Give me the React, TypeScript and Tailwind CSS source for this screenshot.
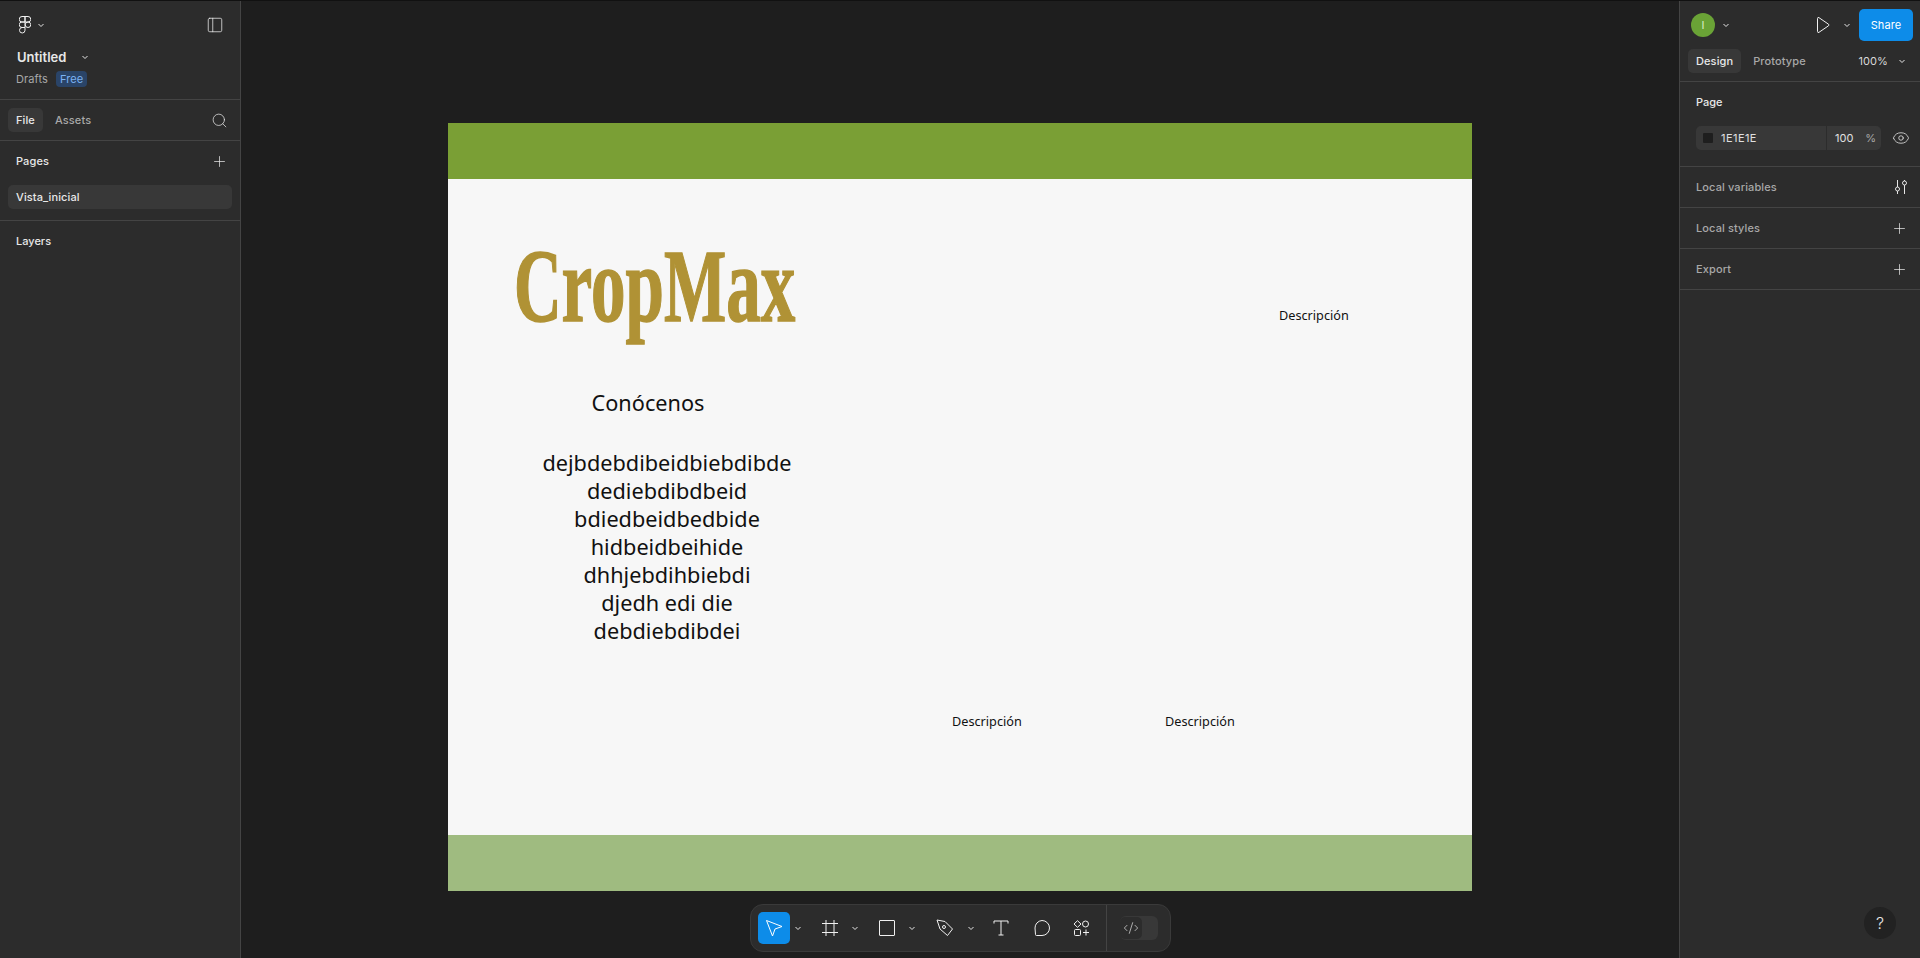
import { CodeXml, Eye, PanelLeft, Plus, Search } from "lucide-react";

const sans = "font-['Inter',sans-serif]";
const canvasText = "font-['Noto_Sans',sans-serif] text-[#111]";

function Caret({ className = "" }: { className?: string }) {
  return (
    <svg width="8" height="8" viewBox="0 0 8 8" className={className} fill="none" stroke="#e6e6e6" strokeWidth="1">
      <path d="M1.5 3 L4 5.5 L6.5 3" />
    </svg>
  );
}

function FigmaMark() {
  return (
    <svg width="12" height="18" viewBox="0 0 12 18" fill="none" stroke="#f0f0f0" strokeWidth="1">
      <path d="M6 .5H3a2.75 2.75 0 0 0 0 5.5h3zM6 .5h3a2.75 2.75 0 0 1 0 5.5H6zM6 6H3a2.75 2.75 0 0 0 0 5.5h3zM6 11.5H3A2.75 2.75 0 1 0 6 14.25zM11.75 8.75a2.75 2.75 0 1 1-5.5 0 2.75 2.75 0 0 1 5.5 0z" />
    </svg>
  );
}

function LeftPanel() {
  return (
    <aside className="w-[241px] shrink-0 bg-[#2c2c2c] border-r border-[#444] flex flex-col">
      <div className="h-[99px] border-b border-[#444] pl-[16px] pr-[16px] flex flex-col">
        <div className="flex items-center justify-between pt-[15px]">
          <div className="flex items-center gap-[6px] ml-[3px]">
            <FigmaMark />
            <Caret />
          </div>
          <PanelLeft size={18} strokeWidth={1} color="#f0f0f0" />
        </div>
        <div className="flex items-center mt-[13px] ml-[1px] text-[13px] font-semibold text-[#e8e8e8] leading-[20px]">
          Untitled
          <Caret className="ml-[15px]" />
        </div>
        <div className="flex items-center mt-[2px] text-[11px] text-[#a8a8a8] leading-[20px] tracking-[0.01em]">
          Drafts
          <span className="ml-[8px] px-[4px] rounded-[4px] bg-[#2a4468] text-[#7cb2f2] leading-[16px]">Free</span>
        </div>
      </div>
      <div className="h-[41px] border-b border-[#444] flex items-center pl-[8px] pr-[12px] text-[11px] tracking-[0.01em]">
        <span className="h-[24px] px-[8px] rounded-[5px] bg-[#383838] text-[#e8e8e8] font-medium flex items-center">File</span>
        <span className="ml-[4px] px-[8px] text-[#a8a8a8] font-medium">Assets</span>
        <Search size={17} strokeWidth={1} color="#f0f0f0" className="ml-auto" />
      </div>
      <div className="h-[80px] border-b border-[#444] px-[8px] text-[11px] font-medium tracking-[0.01em]">
        <div className="h-[40px] flex items-center justify-between pl-[8px] pr-[4px] text-[#e8e8e8]">
          Pages
          <Plus size={17} strokeWidth={1} color="#f0f0f0" />
        </div>
        <div className="mt-[4px] h-[24px] rounded-[5px] bg-[#383838] flex items-center pl-[8px] text-[#e8e8e8]">Vista_inicial</div>
      </div>
      <div className="h-[40px] flex items-center pl-[16px] text-[11px] font-medium text-[#e8e8e8]">Layers</div>
    </aside>
  );
}

function SideRow({ label, children }: { label: string; children: React.ReactNode }) {
  return (
    <div className="h-[41px] border-b border-[#444] flex items-center justify-between pl-[16px] pr-[12px] text-[11px] font-medium text-[#a8a8a8] tracking-[0.01em]">
      {label}
      {children}
    </div>
  );
}

function RightPanel() {
  return (
    <aside className="w-[241px] shrink-0 bg-[#2c2c2c] border-l border-[#444] flex flex-col relative">
      <div className="h-[48px] flex items-center pl-[11px] pr-[7px]">
        <span className="w-[24px] h-[24px] rounded-full bg-[#6aa336] text-[#d8ecc4] text-[11px] flex items-center justify-center">I</span>
        <Caret className="ml-[7px]" />
        <svg width="18" height="18" viewBox="0 0 18 18" className="ml-auto" fill="none" stroke="#f0f0f0" strokeWidth="1">
          <path d="M4.5 2.5a1 1 0 0 1 1.5-.8l9.5 6.5a1 1 0 0 1 0 1.6L6 16.3a1 1 0 0 1-1.5-.8z" />
        </svg>
        <Caret className="ml-[12px]" />
        <span className="ml-[8px] w-[54px] h-[32px] rounded-[5px] bg-[#0d8ce9] text-white text-[11px] flex items-center justify-center tracking-[0.01em]">Share</span>
      </div>
      <div className="h-[33px] border-b border-[#444] flex items-start pl-[8px] pr-[14px] text-[11px] font-medium tracking-[0.01em]">
        <span className="h-[24px] px-[8px] rounded-[5px] bg-[#383838] text-[#e8e8e8] flex items-center">Design</span>
        <span className="h-[24px] ml-[4px] px-[8px] text-[#a8a8a8] flex items-center">Prototype</span>
        <span className="h-[24px] ml-auto text-[#d8d8d8] font-normal flex items-center">100%</span>
        <Caret className="ml-[10px] mt-[8px]" />
      </div>
      <div className="h-[85px] border-b border-[#444] pl-[16px] text-[11px]">
        <div className="h-[40px] flex items-center font-medium text-[#e8e8e8]">Page</div>
        <div className="mt-[4px] flex items-center">
          <div className="w-[185px] h-[24px] rounded-[5px] bg-[#383838] flex items-center text-[#e0e0e0]">
            <span className="ml-[7px] w-[10px] h-[10px] bg-[#1e1e1e] rounded-[1px]"></span>
            <span className="ml-[8px] w-[105px] tracking-[0.04em]">1E1E1E</span>
            <span className="h-[24px] border-l border-[#2c2c2c] pl-[8px] flex items-center">100</span>
            <span className="ml-[12px] text-[#a8a8a8]">%</span>
          </div>
          <Eye size={18} strokeWidth={1} color="#f0f0f0" className="ml-[11px]" />
        </div>
      </div>
      <SideRow label="Local variables">
        <svg width="14" height="16" viewBox="0 0 14 16" fill="none" stroke="#e6e6e6" strokeWidth="1">
          <path d="M3.5 1v7M3.5 12v3M10.5 1v1M10.5 6v9" />
          <circle cx="3.5" cy="10" r="2" />
          <circle cx="10.5" cy="4" r="2" />
        </svg>
      </SideRow>
      <SideRow label="Local styles">
        <Plus size={17} strokeWidth={1} color="#f0f0f0" />
      </SideRow>
      <SideRow label="Export">
        <Plus size={17} strokeWidth={1} color="#f0f0f0" />
      </SideRow>
      <div className="absolute right-[24px] bottom-[19px] w-[32px] h-[32px] rounded-full bg-[#222] text-[#e6e6e6] text-[16px] font-light flex items-center justify-center">?</div>
    </aside>
  );
}

function Toolbar() {
  return (
    <div className="absolute left-[509px] top-[903px] w-[421px] h-[48px] rounded-[13px] bg-[#2c2c2c] border border-[#3a3a3a] flex items-center pl-[7px]">
      <span className="w-[32px] h-[32px] rounded-[5px] bg-[#0d8ce9] flex items-center justify-center">
        <svg width="18" height="18" viewBox="0 0 18 18" fill="none" stroke="#fff" strokeWidth="1">
          <path d="M1.5 1.5 L17 7.5 L10 10 L7.5 17 Z" strokeLinejoin="round" />
        </svg>
      </span>
      <Caret className="ml-[4px]" />
      <svg className="ml-[20px]" width="16" height="16" viewBox="0 0 16 16" fill="none" stroke="#f0f0f0" strokeWidth="1">
        <path d="M4 0v16M12 0v16M0 3.5h16M0 12.5h16" />
      </svg>
      <Caret className="ml-[13px]" />
      <span className="ml-[20px] w-[16px] h-[16px] rounded-[1px] border border-[#f0f0f0]"></span>
      <Caret className="ml-[13px]" />
      <svg className="ml-[20px]" width="18" height="18" viewBox="0 0 18 18" fill="none" stroke="#f0f0f0" strokeWidth="1">
        <path d="M1 1 L9 2.5 L16.5 10 L11.5 16.5 L4 10 Z" strokeLinejoin="round" />
        <circle cx="8" cy="8" r="1.5" />
      </svg>
      <Caret className="ml-[13px]" />
      <svg className="ml-[18px]" width="16" height="16" viewBox="0 0 16 16" fill="none" stroke="#f0f0f0" strokeWidth="1">
        <path d="M1 3.5V1h14v2.5M8 1v14M5.5 15h5" />
      </svg>
      <svg className="ml-[25px]" width="16" height="16" viewBox="0 0 16 16" fill="none" stroke="#f0f0f0" strokeWidth="1">
        <path d="M8 .5a7.5 7.5 0 0 1 0 15H2.5a1 1 0 0 1-1-1L1 8A7.5 7.5 0 0 1 8 .5z" />
      </svg>
      <svg className="ml-[23px]" width="18" height="16" viewBox="0 0 18 16" fill="none" stroke="#f0f0f0" strokeWidth="1">
        <path d="M4.5 .7 L8 4 L4.5 7.3 L1 4 Z" />
        <circle cx="12.5" cy="4" r="3" />
        <rect x="1.5" y="9.5" width="6" height="6" rx="1" />
        <path d="M13 9.5v6M10 12.5h6" />
      </svg>
      <span className="ml-[15px] h-[46px] border-l border-[#444]"></span>
      <span className="ml-[13px] w-[38px] h-[24px] rounded-[6px] bg-[#383838] flex">
        <span className="w-[22px] h-[22px] mt-[1px] rounded-[5px] bg-[#2c2c2c] flex items-center justify-center">
          <CodeXml size={16} strokeWidth={1} color="#f0f0f0" />
        </span>
      </span>
    </div>
  );
}

function Frame() {
  return (
    <div className="absolute left-[207px] top-[122px] w-[1024px] h-[768px] bg-[#f7f7f7] flex flex-col">
      <div className="h-[56px] bg-[#7a9f35]"></div>
      <div className="flex-1 relative">
        <div className="absolute left-[66px] top-[51px] font-['Liberation_Serif',serif] font-bold text-[#b09235] text-[108px] leading-[110px] origin-left scale-x-[0.64] [-webkit-text-stroke:1.5px_#b09235] whitespace-nowrap">
          <span className="text-[103px]">C</span>rop<span className="text-[103px]">M</span>ax
        </div>
        <div className={`absolute left-[79px] top-[210px] w-[242px] text-center text-[21.7px] leading-[28px] ${canvasText}`}>Conócenos</div>
        <div className={`absolute left-[40px] top-[214px] w-[358px] text-center text-[21.7px] leading-[28px] ${canvasText} pt-[56px]`}>
          <div>dejbdebdibeidbiebdibde</div>
          <div>dediebdibdbeid</div>
          <div>bdiedbeidbedbide</div>
          <div>hidbeidbeihide</div>
          <div>dhhjebdihbiebdi</div>
          <div>djedh edi die</div>
          <div>debdiebdibdei</div>
        </div>
        <div className={`absolute left-[831px] top-[126px] text-[12.7px] leading-[20px] ${canvasText}`}>Descripción</div>
        <div className={`absolute left-[504px] top-[532px] text-[12.7px] leading-[20px] ${canvasText}`}>Descripción</div>
        <div className={`absolute left-[717px] top-[532px] text-[12.7px] leading-[20px] ${canvasText}`}>Descripción</div>
      </div>
      <div className="h-[56px] bg-[#9fbb80]"></div>
    </div>
  );
}

export default function App() {
  return (
    <div className={`${sans} w-[1920px] h-[958px] flex overflow-hidden bg-[#1e1e1e] border-t border-[#111]`}>
      <LeftPanel />
      <main className="flex-1 relative">
        <Frame />
        <Toolbar />
      </main>
      <RightPanel />
    </div>
  );
}
